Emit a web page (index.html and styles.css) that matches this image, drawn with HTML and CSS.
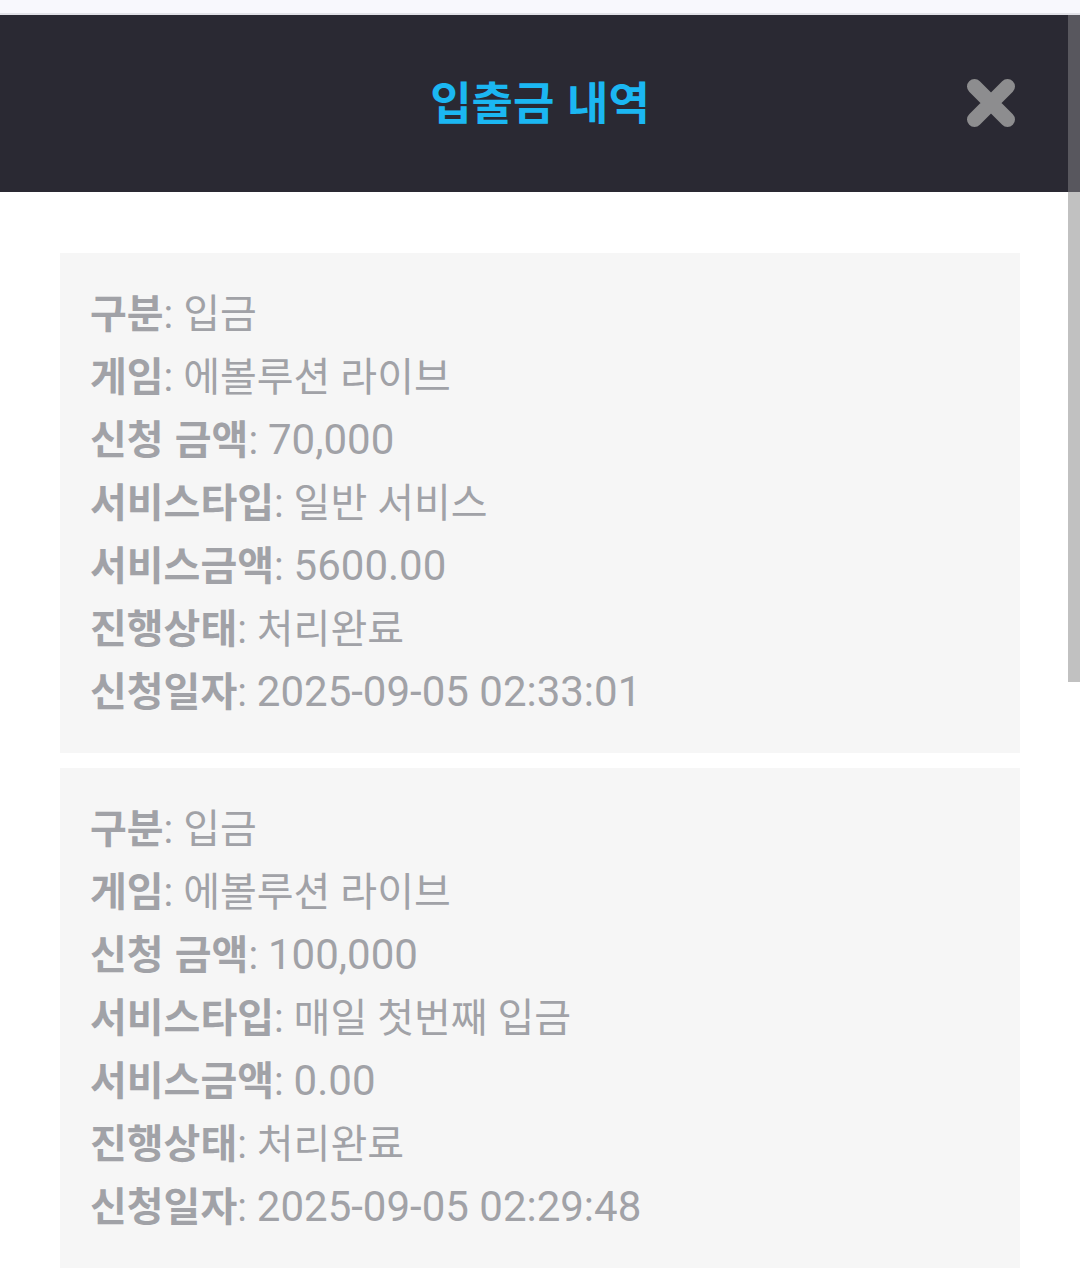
FILE: index.html
```html
<!DOCTYPE html>
<html lang="ko">
<head>
<meta charset="utf-8">
<link rel="stylesheet" href="styles.css">
</head>
<body>
<div class="topstrip"></div>
<div class="modal">
  <header class="head">
    <h1 class="title">입출금 내역</h1>
    <button class="close" aria-label="닫기">
      <svg width="50" height="50" viewBox="0 0 50 50"><path d="M8.5 8.5 L41.5 41.5 M41.5 8.5 L8.5 41.5" stroke="#8d8d8f" stroke-width="15" stroke-linecap="round" fill="none"/></svg>
    </button>
  </header>
  <main class="list">
    <section class="card">
      <p class="row"><b>구분</b>: 입금</p>
      <p class="row"><b>게임</b>: 에볼루션 라이브</p>
      <p class="row"><b>신청 금액</b>: <span class="num">70,000</span></p>
      <p class="row"><b>서비스타입</b>: 일반 서비스</p>
      <p class="row"><b>서비스금액</b>: <span class="num">5600.00</span></p>
      <p class="row"><b>진행상태</b>: 처리완료</p>
      <p class="row"><b>신청일자</b>: <span class="num">2025-09-05 02:33:01</span></p>
    </section>
    <section class="card">
      <p class="row"><b>구분</b>: 입금</p>
      <p class="row"><b>게임</b>: 에볼루션 라이브</p>
      <p class="row"><b>신청 금액</b>: <span class="num">100,000</span></p>
      <p class="row"><b>서비스타입</b>: 매일 첫번째 입금</p>
      <p class="row"><b>서비스금액</b>: <span class="num">0.00</span></p>
      <p class="row"><b>진행상태</b>: 처리완료</p>
      <p class="row"><b>신청일자</b>: <span class="num">2025-09-05 02:29:48</span></p>
    </section>
  </main>
</div>
<div class="scroll-head"></div>
<div class="scroll-thumb"></div>
</body>
</html>
```
FILE: styles.css
```css
html, body {
  margin: 0;
  padding: 0;
  height: 100%;
  overflow: hidden;
  background: #ffffff;
  font-family: "Roboto", "Noto Sans CJK KR", sans-serif;
}
.topstrip {
  height: 13px;
  background: #f8f8fd;
  border-bottom: 2px solid #e2e2e8;
}
.modal {
  width: 1068px;
}
.head {
  height: 171px;
  padding-bottom: 6px;
  background: #2a2933;
  display: flex;
  align-items: center;
  justify-content: center;
  position: relative;
  width: 1080px;
}
.title {
  margin: 0;
  font-family: "Noto Sans CJK KR", sans-serif;
  font-weight: 700;
  font-size: 45px;
  line-height: 1.2;
  color: #1bb7f2;
}
.close {
  position: absolute;
  left: 966px;
  top: 63px;
  width: 50px;
  height: 50px;
  padding: 0;
  border: 0;
  background: none;
}
.close svg { display: block; }
.list {
  padding: 61px 60px 0 60px;
  display: flex;
  flex-direction: column;
  gap: 15px;
  width: 960px;
}
.card {
  background: #f6f6f6;
  padding: 30px 30px 29px;
}
.row {
  margin: 0;
  height: 63px;
  font-size: 40px;
  line-height: 63px;
  color: #a1a2a7;
  white-space: nowrap;
  overflow: visible;
}
.row b {
  font-family: "Noto Sans CJK KR", sans-serif;
  font-weight: 700;
  line-height: 1;
}
.num {
  font-family: "Roboto", sans-serif;
  font-size: 42px;
  line-height: 1;
}
.scroll-head {
  position: absolute;
  left: 1068px;
  top: 15px;
  width: 12px;
  height: 177px;
  background: #58575e;
}
.scroll-thumb {
  position: absolute;
  left: 1068px;
  top: 192px;
  width: 12px;
  height: 490px;
  background: #c1c1c1;
}
```
